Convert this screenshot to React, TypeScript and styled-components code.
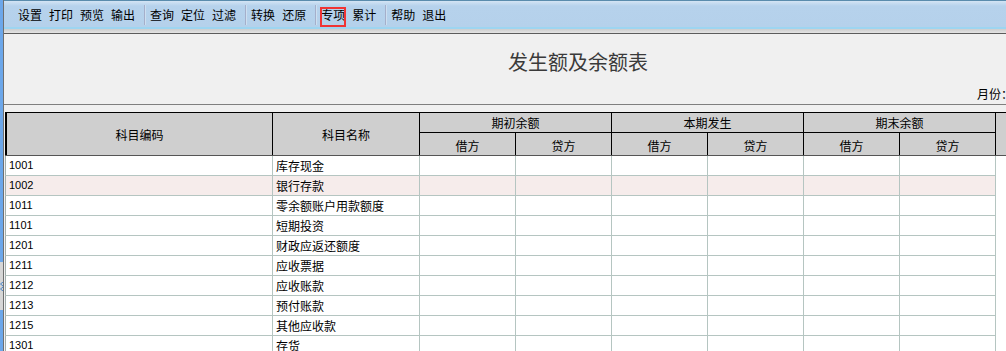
import React from "react";
import styled, { createGlobalStyle } from "styled-components";

const GlobalStyle = createGlobalStyle`
  html, body {
    margin: 0;
    padding: 0;
    height: 100%;
    overflow: hidden;
    background: #f0f0f0;
  }
  body {
    font-family: "Noto Sans CJK SC", "Liberation Sans", sans-serif;
    font-size: 12px;
    color: #000;
  }
`;

const COLS = "268px 147px repeat(6, 96px) 1fr";

const Window = styled.div`
  display: flex;
  height: 351px;
  width: 1006px;
  overflow: hidden;
`;

const LeftStrip = styled.div`
  width: 3px;
  flex-shrink: 0;
  display: flex;
  flex-direction: column;
  border-right: 1px solid #6f6f6f;
`;

const StripBlue = styled.div<{ $h?: number }>`
  background: #6ca7ea;
  ${(p) => (p.$h ? `height: ${p.$h}px; flex-shrink: 0;` : "flex: 1;")}
`;

const StripHandle = styled.div`
  height: 48px;
  flex-shrink: 0;
  background: #d6d6d6;
  display: flex;
  align-items: center;
  justify-content: center;
`;

const Main = styled.div`
  flex: 1;
  min-width: 0;
  display: flex;
  flex-direction: column;
  overflow: hidden;

  & > * {
    flex-shrink: 0;
  }
`;

const Toolbar = styled.div`
  height: 26px;
  border-top: 1px solid #5a8cad;
  border-bottom: 2px solid #9dd5f1;
  background: linear-gradient(#d3e4f4 0px, #b6d2ec 5px, #b5d1eb 100%);
  display: flex;
  align-items: flex-start;
  gap: 1px;
  padding-left: 11px;
`;

const ToolShade = styled.div`
  height: 4px;
  background: linear-gradient(#cdcdcd, #e4e4e4);
  border-bottom: 1px solid #5c5c5c;
`;

const ToolButton = styled.div<{ $marked?: boolean }>`
  position: relative;
  height: 22px;
  margin-top: 4px;
  padding: 0 3px 2px;
  line-height: 20px;
  box-sizing: border-box;
  white-space: nowrap;
  cursor: default;

  ${(p) =>
    p.$marked &&
    `
    &::after {
      content: "";
      position: absolute;
      top: 2px;
      bottom: 0;
      left: 2px;
      right: 2px;
      border: 2px solid #f03434;
    }
  `}
`;

const ToolSep = styled.div`
  width: 1px;
  height: 20px;
  margin: 4px 1px 0 5px;
  background: #a5afca;
  box-shadow: 1px 0 0 #cddff1;
`;

const ReportHead = styled.div`
  height: 70px;
  background: #f0f0f0;
  border-bottom: 1px solid #7f7f7f;
  display: flex;
  flex-direction: column;
  overflow: hidden;
`;

const Title = styled.div`
  width: 1148px;
  margin-top: 16px;
  text-align: center;
  font-size: 20px;
  line-height: 24px;
  color: #3a3a3a;
  white-space: nowrap;
`;

const MonthLabel = styled.div`
  margin: 13px 0 0 973px;
  line-height: 14px;
  white-space: nowrap;
`;

const Gap = styled.div`
  height: 7px;
  background: #f0f0f0;
`;

const HeadGrid = styled.div`
  display: grid;
  grid-template-columns: ${COLS};
  grid-template-rows: 20px 22px;
  margin-left: 1px;
  border-top: 1px solid #000;
  border-bottom: 1px solid #555;
  background: #cfcfcf;
`;

const HeadCell = styled.div<{
  $col: string;
  $row: string;
  $first?: boolean;
  $group?: boolean;
  $low?: boolean;
}>`
  grid-column: ${(p) => p.$col};
  grid-row: ${(p) => p.$row};
  box-sizing: border-box;
  display: flex;
  align-items: center;
  justify-content: center;
  border-right: 1px solid #000;
  ${(p) => p.$first && "border-left: 2px solid #000;"}
  ${(p) => p.$group && "border-bottom: 1px solid #000;"}
  ${(p) => p.$low && "padding-top: 3px;"}
  white-space: nowrap;
`;

const HeadFill = styled.div`
  grid-column: 9;
  grid-row: 1 / 3;
`;

const Body = styled.div`
  margin-left: 1px;
  background: #fff;
`;

const Row = styled.div<{ $alt?: boolean }>`
  display: grid;
  grid-template-columns: ${COLS};
  height: 20px;
  background: ${(p) => (p.$alt ? "#f6eceb" : "#fff")};
`;

const Cell = styled.div<{ $first?: boolean; $code?: boolean }>`
  box-sizing: border-box;
  border-right: 1px solid #b5c5c1;
  border-bottom: 1px solid #b5c5c1;
  ${(p) => p.$first && "border-left: 1px solid #a3afad;"}
  padding-left: 3px;
  line-height: 19px;
  white-space: nowrap;
  overflow: hidden;
  ${(p) => p.$code && `font-family: "Liberation Sans", sans-serif; font-size: 11px;`}
`;

const RowTail = styled.div`
  background: #fff;
`;

const groups: string[][] = [
  ["设置", "打印", "预览", "输出"],
  ["查询", "定位", "过滤"],
  ["转换", "还原"],
  ["专项", "累计"],
  ["帮助", "退出"],
];

const accounts: [string, string][] = [
  ["1001", "库存现金"],
  ["1002", "银行存款"],
  ["1011", "零余额账户用款额度"],
  ["1101", "短期投资"],
  ["1201", "财政应返还额度"],
  ["1211", "应收票据"],
  ["1212", "应收账款"],
  ["1213", "预付账款"],
  ["1215", "其他应收款"],
  ["1301", "存货"],
];

const periods = ["期初余额", "本期发生", "期末余额"];

const CollapseArrow = () => (
  <svg width="3" height="9" viewBox="0 0 3 9">
    <polyline points="3,0 0.5,2 3,4" fill="none" stroke="#4b86c8" strokeWidth="1" />
    <polyline points="3,5 0.5,7 3,9" fill="none" stroke="#4b86c8" strokeWidth="1" />
  </svg>
);

const App = () => (
  <>
    <GlobalStyle />
    <Window>
      <LeftStrip>
        <StripBlue $h={262} />
        <StripHandle>
          <CollapseArrow />
        </StripHandle>
        <StripBlue />
      </LeftStrip>
      <Main>
        <Toolbar>
          {groups.map((g, gi) => (
            <React.Fragment key={gi}>
              {gi > 0 && <ToolSep />}
              {g.map((t) => (
                <ToolButton key={t} $marked={t === "专项"}>
                  {t}
                </ToolButton>
              ))}
            </React.Fragment>
          ))}
        </Toolbar>
        <ToolShade />
        <ReportHead>
          <Title>发生额及余额表</Title>
          <MonthLabel>月份：</MonthLabel>
        </ReportHead>
        <Gap />
        <HeadGrid>
          <HeadCell $col="1" $row="1 / 3" $first>
            科目编码
          </HeadCell>
          <HeadCell $col="2" $row="1 / 3">
            科目名称
          </HeadCell>
          {periods.map((p, i) => (
            <HeadCell key={p} $col={`${3 + i * 2} / span 2`} $row="1" $group>
              {p}
            </HeadCell>
          ))}
          <HeadFill />
          {periods.map((p, i) => (
            <React.Fragment key={p}>
              <HeadCell $col={`${3 + i * 2}`} $row="2" $low>
                借方
              </HeadCell>
              <HeadCell $col={`${4 + i * 2}`} $row="2" $low>
                贷方
              </HeadCell>
            </React.Fragment>
          ))}
        </HeadGrid>
        <Body>
          {accounts.map(([code, name], i) => (
            <Row key={code} $alt={i === 1}>
              <Cell $first $code>
                {code}
              </Cell>
              <Cell>{name}</Cell>
              {Array.from({ length: 6 }).map((_, k) => (
                <Cell key={k} />
              ))}
              <RowTail />
            </Row>
          ))}
        </Body>
      </Main>
    </Window>
  </>
);

export default App;
